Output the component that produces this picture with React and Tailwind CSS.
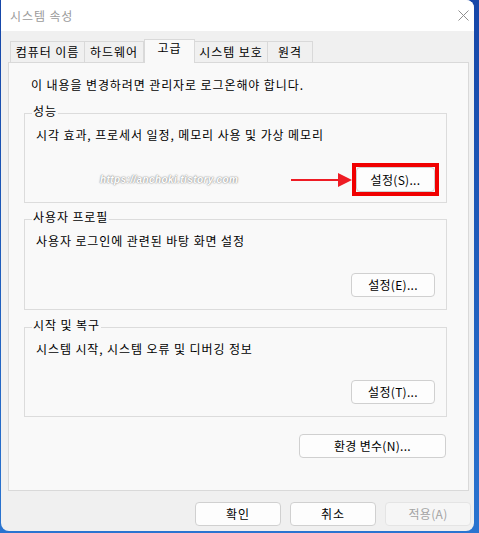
import React from "react";

const Btn = ({ children, className = "", disabled }) => (
  <button
    className={`h-[24px] rounded-[4px] border text-[12px] leading-none ${
      disabled
        ? "border-[#e4e4e4] bg-[#f6f6f6] text-[#a3a3a3]"
        : "border-[#d0d0d0] bg-[#fdfdfd] text-black"
    } ${className}`}
  >
    {children}
  </button>
);

const Group = ({ title, desc, className = "", children }) => (
  <div className={`relative border border-[#dcdcdc] ${className}`}>
    <span className="absolute left-[7px] top-[-11px] bg-[#f9f9f9] px-[1px] leading-[16px]">
      {title}
    </span>
    <p className="pl-[11px] pt-[13px] leading-[16px]">{desc}</p>
    {children}
  </div>
);

const tabs = [
  { label: "컴퓨터 이름", w: "w-[75px]" },
  { label: "하드웨어", w: "w-[60px]" },
  { label: "고급", w: "w-[51px]", active: true },
  { label: "시스템 보호", w: "w-[74px]" },
  { label: "원격", w: "w-[46px]" },
];

export default function App() {
  return (
    <div className="h-[533px] w-[479px] overflow-hidden bg-gradient-to-b from-[#1646a8] to-[#2a74d0] font-['Noto_Sans_CJK_KR','Malgun_Gothic',sans-serif] text-[12px] tracking-[0.9px] text-black">
      <div className="ml-[1px] flex h-[531px] w-[473px] flex-col overflow-hidden rounded-tr-[8px] rounded-b-[8px] bg-[#f0f0f0]">
        {/* title bar */}
        <div className="flex h-[31px] shrink-0 items-center justify-between bg-white pl-[9px] pr-[5px]">
          <span className="leading-[16px] text-[#9b9b9b]">시스템 속성</span>
          <svg width="11" height="11" viewBox="0 0 11 11">
            <path d="M0.5 0.5L10.5 10.5M10.5 0.5L0.5 10.5" stroke="#8f8f8f" strokeWidth="1" />
          </svg>
        </div>

        {/* tabs */}
        <div className="ml-[9px] mt-[8px] flex h-[23px] items-end">
          {tabs.map((t) =>
            t.active ? (
              <div
                key={t.label}
                className={`${t.w} relative z-10 -mb-px flex h-[24px] items-start justify-center border border-b-0 border-[#d9d9d9] bg-[#f9f9f9] leading-[16px]`}
              >
                {t.label}
              </div>
            ) : (
              <div
                key={t.label}
                className={`${t.w} -ml-px flex h-[21px] items-center justify-center border border-b-0 border-[#d9d9d9] bg-[#f0f0f0] leading-[16px] first:ml-0`}
              >
                {t.label}
              </div>
            )
          )}
        </div>

        {/* panel */}
        <div className="ml-[7px] flex h-[429px] w-[461px] flex-col border border-[#d9d9d9] bg-[#f9f9f9]">
          <p className="pl-[22px] pt-[14px] leading-[16px]">
            이 내용을 변경하려면 관리자로 로그온해야 합니다.
          </p>

          <div className="ml-[15px] mt-[20px] flex w-[423px] flex-col">
            <Group title="성능" desc="시각 효과, 프로세서 일정, 메모리 사용 및 가상 메모리" className="h-[90px]">
              <div className="mt-[20px] flex items-center pl-[75px] pr-[7px]">
                <span className="italic text-[10px] leading-none tracking-[0.4px] text-white font-['Liberation_Sans',sans-serif] font-bold [text-shadow:0_0_2px_#8c8c8c,0_0_1px_#8c8c8c]">
                  https://anchoki.tistory.com
                </span>
                <div className="flex-1" />
                <svg width="61" height="16" viewBox="0 0 61 16" className="block">
                  <path d="M0 8H49" stroke="#ee1c24" strokeWidth="2" />
                  <path d="M47 1L61 8L47 15Z" fill="#ee1c24" />
                </svg>
                <div className="border-[4px] border-[#f00000] p-0">
                  <Btn className="block h-[25px] w-[79px] rounded-[3px] tracking-[0.3px]">설정(S)...</Btn>
                </div>
              </div>
            </Group>

            <Group title="사용자 프로필" desc="사용자 로그인에 관련된 바탕 화면 설정" className="mt-[16px] h-[91px]">
              <div className="mt-[24px] flex justify-end pr-[11px]">
                <Btn className="w-[84px] tracking-[0.3px]">설정(E)...</Btn>
              </div>
            </Group>

            <Group title="시작 및 복구" desc="시스템 시작, 시스템 오류 및 디버깅 정보" className="mt-[17px] h-[90px]">
              <div className="mt-[23px] flex justify-end pr-[11px]">
                <Btn className="w-[84px] tracking-[0.3px]">설정(T)...</Btn>
              </div>
            </Group>

            <div className="mt-[17px] flex justify-end pr-[1px]">
              <Btn className="h-[24px] w-[147px] tracking-[0.3px]">환경 변수(N)...</Btn>
            </div>
          </div>
        </div>

        {/* footer */}
        <div className="mt-[11px] flex justify-end gap-[9px] pr-[3px]">
          <Btn className="w-[86px]">확인</Btn>
          <Btn className="w-[86px]">취소</Btn>
          <Btn className="w-[86px] tracking-[0.3px]" disabled>
            적용(A)
          </Btn>
        </div>
      </div>
    </div>
  );
}
